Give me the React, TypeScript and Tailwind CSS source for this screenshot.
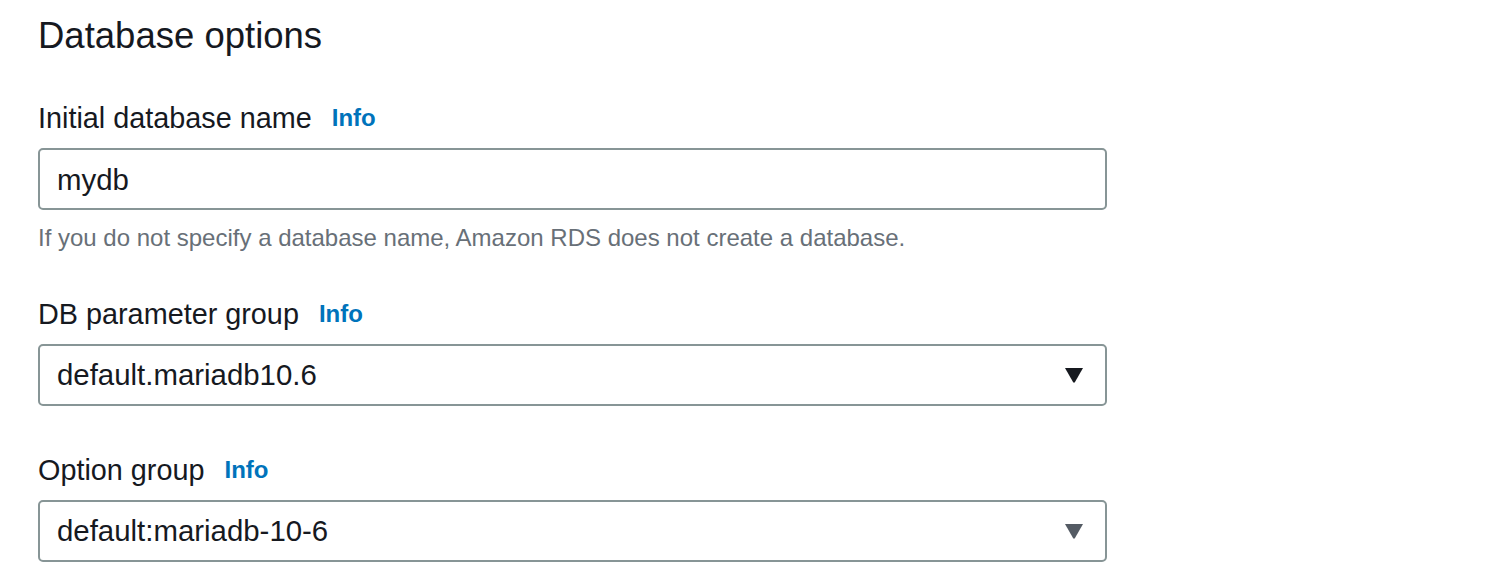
import React from "react";

const font = { fontFamily: '"Liberation Sans", Arial, sans-serif' };

function Label({ text }: { text: string }) {
  return (
    <div className="flex items-center h-[40px]">
      <span className="text-[28.8px] leading-[40px] text-[#16191f]">{text}</span>
      <span className="ml-[20px] text-[24px] leading-[40px] font-bold text-[#0073bb]">Info</span>
    </div>
  );
}

function Caret({ color }: { color: string }) {
  return (
    <svg width="20" height="16" viewBox="0 0 20 16" className="shrink-0">
      <path d="M1 1 L19 1 L11 15 Q10 16.5 9 15 Z" fill={color} />
    </svg>
  );
}

function Select({ value, caret }: { value: string; caret: string }) {
  return (
    <div className="w-[1069px] h-[62px] border-2 border-[#879596] rounded-[5px] bg-white flex items-center justify-between pl-[17px] pr-[21px]">
      <span className="text-[29.4px] leading-[36px] text-[#16191f]">{value}</span>
      <Caret color={caret} />
    </div>
  );
}

export default function App() {
  return (
    <div className="w-[1510px] h-[582px] bg-white overflow-hidden pl-[38px] pt-[14px]" style={font}>
      <h2 className="text-[36.5px] leading-[44px] text-[#16191f] font-normal">Database options</h2>

      <div className="mt-[40px]">
        <Label text="Initial database name" />
      </div>
      <div className="mt-[10px] w-[1069px] h-[62px] border-2 border-[#879596] rounded-[5px] bg-white flex items-center pl-[17px] pt-[2px]">
        <span className="text-[29.4px] leading-[36px] text-[#16191f]">mydb</span>
      </div>
      <div className="mt-[10px] text-[24px] leading-[36px] text-[#687078]">
        If you do not specify a database name, Amazon RDS does not create a database.
      </div>

      <div className="mt-[38px]">
        <Label text="DB parameter group" />
      </div>
      <div className="mt-[10px]">
        <Select value="default.mariadb10.6" caret="#16191f" />
      </div>

      <div className="mt-[44px]">
        <Label text="Option group" />
      </div>
      <div className="mt-[10px]">
        <Select value="default:mariadb-10-6" caret="#545b64" />
      </div>
    </div>
  );
}
